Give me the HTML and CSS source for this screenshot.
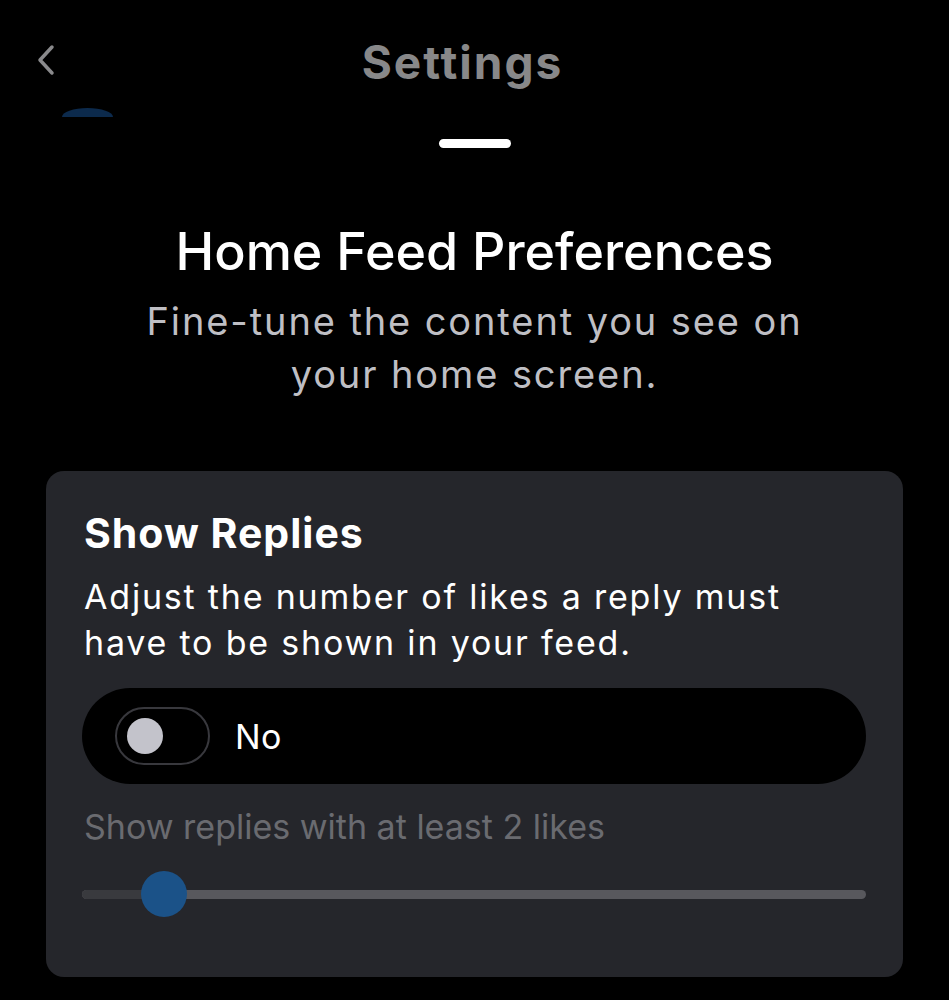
FILE: index.html
```html
<!DOCTYPE html>
<html lang="en">
<head>
<meta charset="utf-8">
<title>Settings</title>
<link rel="stylesheet" href="styles.css">
</head>
<body>
<div class="screen">
  <header class="topbar">
    <button class="back" aria-label="Back">
      <svg width="20" height="32" viewBox="0 0 20 32"><path d="M16 3 L4 16 L16 29" fill="none" stroke="#8a8a8c" stroke-width="3.5" stroke-linecap="round" stroke-linejoin="round"/></svg>
    </button>
    <h1 class="topbar-title">Settings</h1>
    <span class="peek"></span>
  </header>
  <div class="grabber"></div>
  <section class="intro">
    <h2 class="intro-title">Home Feed Preferences</h2>
    <p class="intro-sub">Fine-tune the content you see on<br>your home screen.</p>
  </section>
  <section class="card">
    <h3 class="card-title">Show Replies</h3>
    <p class="card-desc">Adjust the number of likes a reply must<br>have to be shown in your feed.</p>
    <div class="toggle-row">
      <span class="switch"><span class="knob"></span></span>
      <span class="toggle-label">No</span>
    </div>
    <p class="slider-label">Show replies with at least 2 likes</p>
    <div class="slider">
      <div class="track"><div class="track-fill"></div></div>
      <div class="thumb"></div>
    </div>
  </section>
</div>
</body>
</html>
```

FILE: styles.css
```css
html, body {
  margin: 0;
  padding: 0;
  background: #000;
}
body {
  font-family: Inter, "Noto Sans", "Liberation Sans", sans-serif;
  color: #fff;
}
.screen {
  width: 949px;
  height: 1000px;
  overflow: hidden;
  position: relative;
}
.topbar {
  height: 124px;
  display: flex;
  align-items: center;
  justify-content: center;
  position: relative;
  padding-right: 24px;
}
.back {
  position: absolute;
  left: 36px;
  top: 44px;
  background: none;
  border: 0;
  padding: 0;
  width: 20px;
  height: 32px;
}
.back svg { display: block; }
.topbar-title {
  margin: 0;
  font-size: 46px;
  font-weight: 700;
  letter-spacing: 2px;
  color: #888889;
  line-height: 1;
}
.peek {
  position: absolute;
  left: 62px;
  top: 108px;
  width: 51px;
  height: 18px;
  border-radius: 50%;
  background: #0c2a4c;
  clip-path: inset(0 0 50% 0);
}
.grabber {
  width: 72px;
  height: 9px;
  border-radius: 5px;
  background: #fff;
  margin: 15px auto 0;
}
.intro {
  text-align: center;
  margin-top: 72px;
}
.intro-title {
  margin: 0;
  font-size: 52px;
  font-weight: 500;
  line-height: 64px;
}
.intro-sub {
  margin: 11px 0 0;
  font-size: 38px;
  letter-spacing: 1.9px;
  line-height: 53px;
  color: #bfbfc4;
  font-weight: 400;
}
.card {
  margin: 70px 46px 0;
  background: #25262b;
  border-radius: 18px;
  padding: 37px 37px 60px 36px;
}
.card-title {
  margin: 0;
  padding-left: 2px;
  font-size: 41px;
  font-weight: 700;
  letter-spacing: 1px;
  line-height: 50px;
}
.card-desc {
  margin: 16px 0 0;
  padding-left: 2px;
  font-size: 34px;
  letter-spacing: 1.8px;
  line-height: 46px;
  font-weight: 400;
}
.toggle-row {
  margin-top: 22px;
  height: 96px;
  border-radius: 48px;
  background: #000;
  display: flex;
  align-items: center;
  padding-left: 33px;
  gap: 25px;
}
.switch {
  box-sizing: border-box;
  width: 95px;
  height: 58px;
  border: 2px solid #38383d;
  border-radius: 29px;
  display: flex;
  align-items: center;
  padding-left: 10px;
}
.knob {
  width: 36px;
  height: 36px;
  border-radius: 50%;
  background: #c3c3cb;
}
.toggle-label {
  font-size: 34px;
  letter-spacing: 0.5px;
  color: #fff;
}
.slider-label {
  margin: 23px 0 0;
  padding-left: 2px;
  font-size: 34px;
  line-height: 40px;
  color: #6a6b70;
}
.slider {
  position: relative;
  margin-top: 24px;
  height: 46px;
  display: flex;
  align-items: center;
}
.track {
  flex: 1;
  height: 9px;
  border-radius: 5px;
  background: #58585d;
  overflow: hidden;
}
.track-fill {
  width: 82px;
  height: 100%;
  background: #393a3e;
}
.thumb {
  position: absolute;
  left: 59px;
  top: 0;
  width: 46px;
  height: 46px;
  border-radius: 50%;
  background: #1b5288;
}
```
